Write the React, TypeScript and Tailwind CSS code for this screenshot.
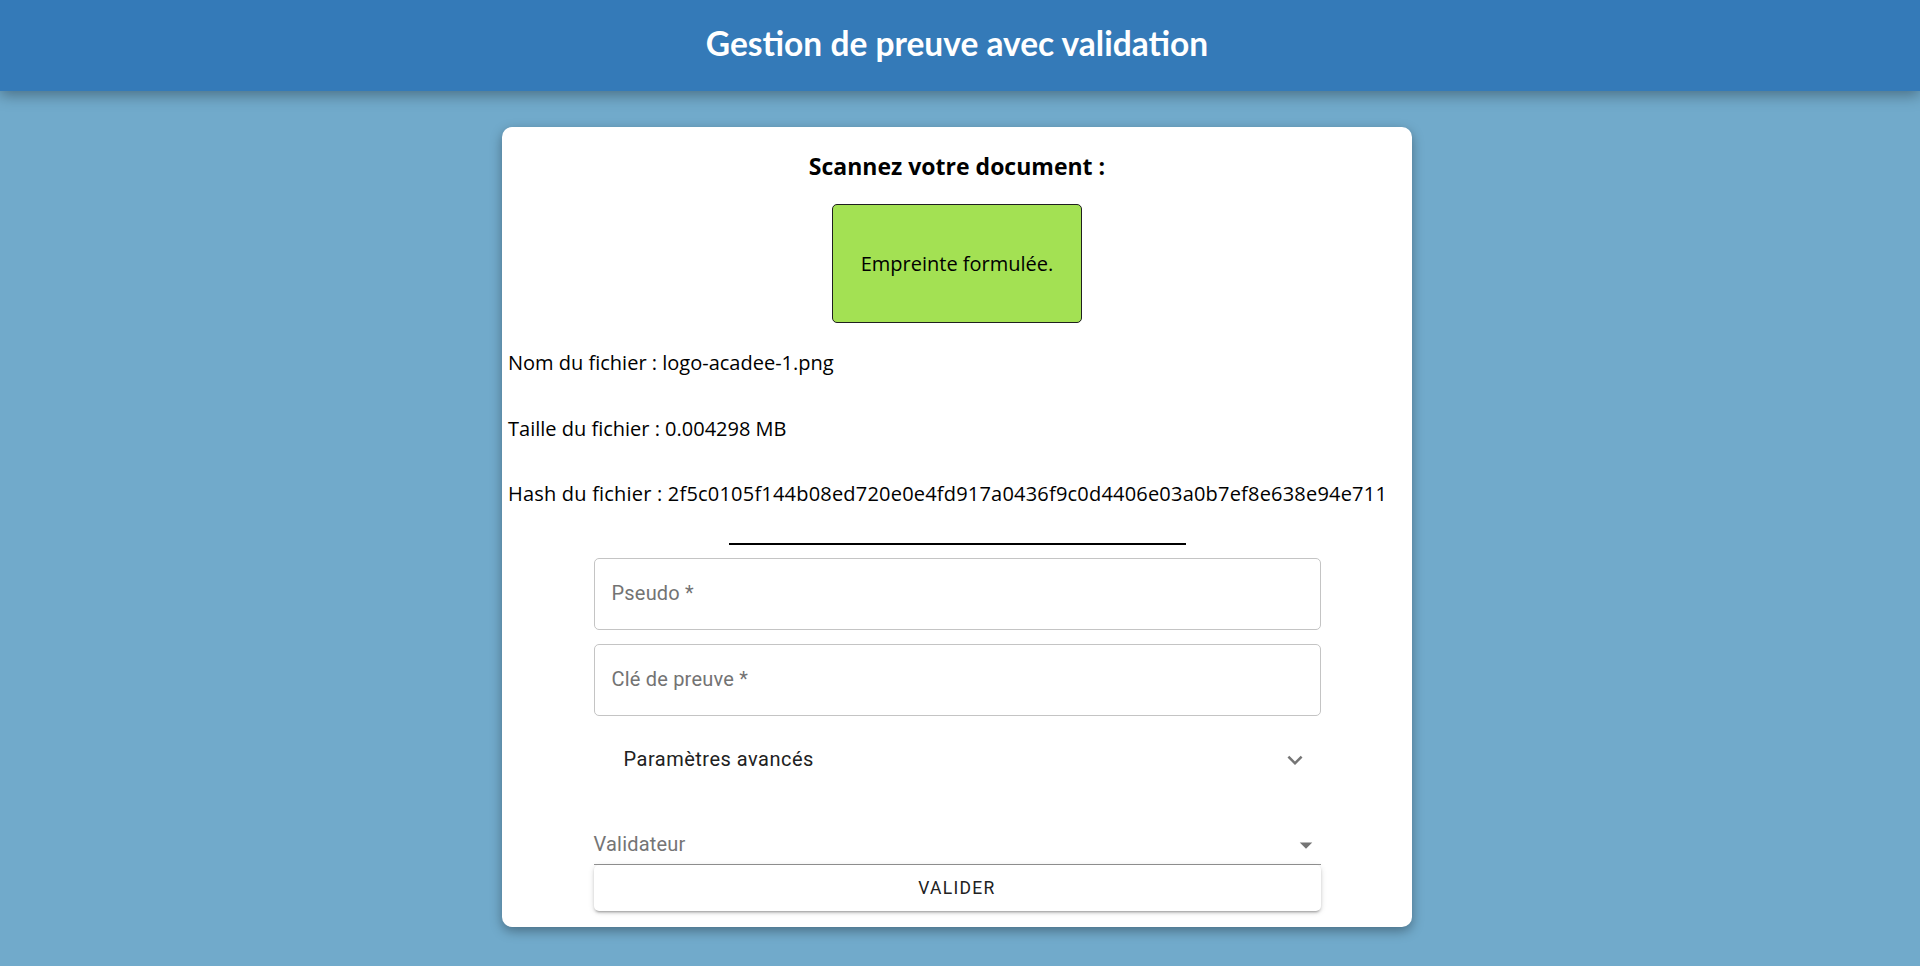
import React from "react";

function ExpandMore() {
  return (
    <svg width="30" height="30" viewBox="0 0 24 24" className="fill-[#757575]">
      <path d="M16.59 8.59 12 13.17 7.41 8.59 6 10l6 6 6-6z" />
    </svg>
  );
}

function ArrowDropDown() {
  return (
    <svg width="30" height="30" viewBox="0 0 24 24" className="fill-[#757575]">
      <path d="M7 10l5 5 5-5z" />
    </svg>
  );
}

export default function App() {
  return (
    <div className="min-h-screen bg-[#71aacb] font-['Open_Sans',sans-serif] pb-[2px]">
      <header className="relative z-10 h-[91px] bg-[#347ab8] shadow-[0_4px_14px_rgba(0,0,0,0.35)] flex items-center justify-center pr-[6px] pb-[4px]">
        <h1 className="text-white text-[33.5px] font-bold leading-none font-['Lato',sans-serif]">Gestion de preuve avec validation</h1>
      </header>
      <main className="pt-[36px] flex justify-center pr-[6px]">
        <div className="w-[910px] bg-white rounded-[10px] shadow-[0_4px_12px_rgba(0,0,0,0.35)] pt-[25px] pb-[16px] flex flex-col items-center text-black">
          <h2 className="text-[23px] leading-[28px] font-bold">Scannez votre document :</h2>
          <div className="mt-[24px] w-[250px] h-[119px] bg-[#a3e153] border border-[#1f1f1f] rounded-[5px] flex items-center justify-center text-[20px]">
            Empreinte formulée.
          </div>
          <div className="self-stretch pl-[6px] text-[20px] leading-[24px]">
            <p className="mt-[28px]">Nom du fichier : logo-acadee-1.png</p>
            <p className="mt-[42px]">Taille du fichier : 0.004298 MB</p>
            <p className="mt-[41px] tracking-[0.2px]">Hash du fichier : 2f5c0105f144b08ed720e0e4fd917a0436f9c0d4406e03a0b7ef8e638e94e711</p>
          </div>
          <div className="mt-[37px] w-[457px] h-[2px] bg-black" />
          <div className="w-[727px] font-['Roboto',sans-serif] text-[20px] tracking-[0.2px]">
            <div className="mt-[13px] h-[72px] border border-[#c4c4c4] rounded-[5px] flex items-center pl-[17px] pb-[2px] text-[#737373]">
              Pseudo *
            </div>
            <div className="mt-[14px] h-[72px] border border-[#c4c4c4] rounded-[5px] flex items-center pl-[17px] pb-[2px] text-[#737373]">
              Clé de preuve *
            </div>
            <div className="mt-[14px] h-[60px] flex items-center justify-between pl-[30px] pr-[11px] text-[#212121]">
              <span className="tracking-[0.5px] -mt-[2px]">Paramètres avancés</span>
              <ExpandMore />
            </div>
            <div className="h-[75px] flex items-end border-b border-[#949494]">
              <div className="flex-1 flex items-start justify-between h-[35px]">
                <span className="text-[#757575] leading-[20px] mt-[5px]">Validateur</span>
                <span className="mt-[1px]">
                  <ArrowDropDown />
                </span>
              </div>
            </div>
            <button className="w-full h-[46px] bg-white rounded-[5px] shadow-[0_3px_2px_-2px_rgba(0,0,0,0.2),0_2px_3px_0_rgba(0,0,0,0.14),0_1px_6px_0_rgba(0,0,0,0.12)] text-[17.5px] font-normal tracking-[1.3px] text-[#212121]">
              VALIDER
            </button>
          </div>
        </div>
      </main>
    </div>
  );
}
